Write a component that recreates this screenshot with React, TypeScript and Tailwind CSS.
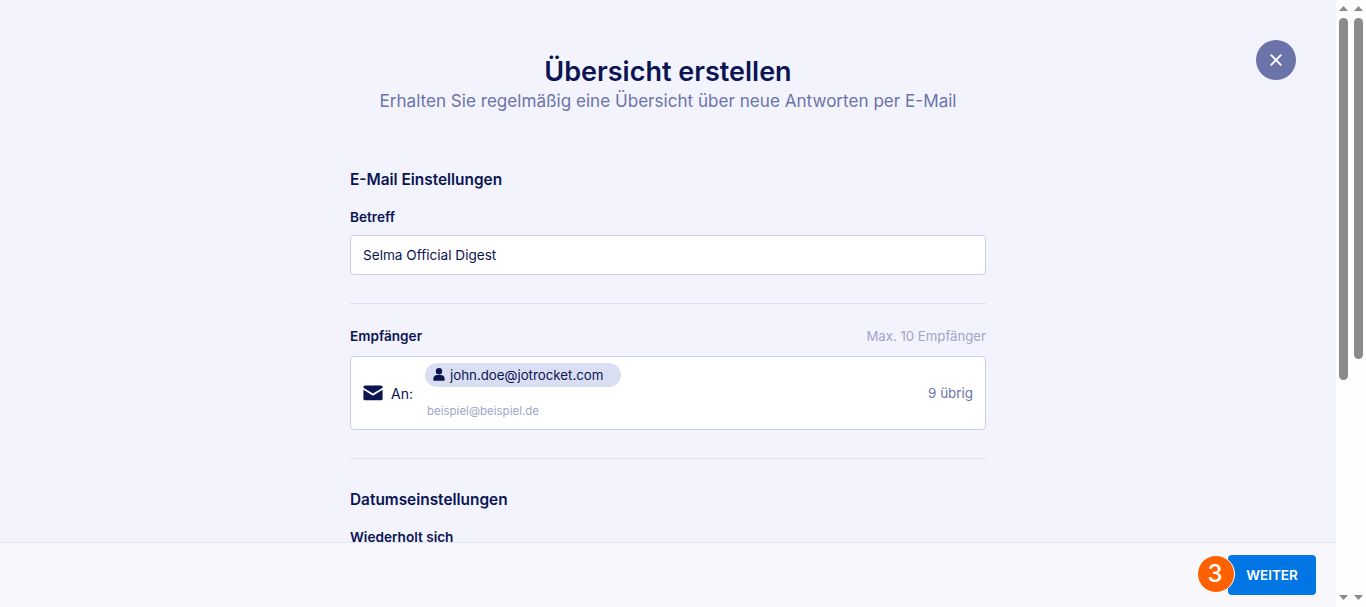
const F = "font-['Inter',sans-serif]";

function Label({ children }: { children: React.ReactNode }) {
  return <div className="text-[13.6px] leading-5 font-semibold text-[#0a1551]">{children}</div>;
}

function Scrollbar({ thumb }: { thumb: string }) {
  return (
    <div className="w-[15px] h-full flex flex-col items-center shrink-0">
      <svg width="9" height="5" viewBox="0 0 9 5" className="mt-[6px] shrink-0"><path d="M4.5 0L9 5H0z" fill="#8a8a8a" /></svg>
      <div className="flex-1 w-full pt-[7px]">
        <div className={`w-[9px] mx-auto bg-[#8a8a8a] rounded-[5px] ${thumb}`} />
      </div>
      <svg width="9" height="5" viewBox="0 0 9 5" className="mb-[7px] shrink-0"><path d="M0 0h9L4.5 5z" fill="#8a8a8a" /></svg>
    </div>
  );
}

export default function App() {
  return (
    <div className={`${F} w-[1366px] h-[607px] overflow-hidden flex bg-[#fdfdfd]`}>
      <div className="w-[1336px] shrink-0 h-full relative bg-[#f3f3fe] overflow-hidden flex flex-col">
        <button className="absolute top-10 right-10 w-10 h-10 rounded-full bg-[#6c73a8] flex items-center justify-center">
          <svg width="12" height="12" viewBox="0 0 12 12"><path d="M1.2 1.2l9.6 9.6M10.8 1.2l-9.6 9.6" stroke="#fff" strokeWidth="1.9" strokeLinecap="round" /></svg>
        </button>
        <div className="flex-1 overflow-hidden">
          <div className="w-[636px] mx-auto pt-[56px]">
            <h1 className="text-center text-[27px] leading-8 font-semibold text-[#0a1551]">Übersicht erstellen</h1>
            <p className="text-center text-[17.1px] leading-6 mt-[1px] text-[#6c73a8]">Erhalten Sie regelmäßig eine Übersicht über neue Antworten per E-Mail</p>
            <h2 className="mt-[55px] text-[15.4px] leading-6 font-semibold text-[#0a1551]">E-Mail Einstellungen</h2>
            <div className="mt-[15px]"><Label>Betreff</Label></div>
            <div className="mt-2 h-10 bg-white border border-[#c8ceed] rounded-[4px] px-3 flex items-center text-[13.6px] text-[#0a1551]">Selma Official Digest</div>
            <div className="h-px bg-[#dadef3] mt-7" />
            <div className="mt-[22px] flex justify-between items-center">
              <Label>Empfänger</Label>
              <span className="text-[13.2px] leading-5 text-[#a0a6c7]">Max. 10 Empfänger</span>
            </div>
            <div className="mt-[10px] h-[74px] bg-white border border-[#c8ceed] rounded-[4px] pl-3 pr-3 flex items-center text-[#0a1551]">
              <svg width="20" height="16" viewBox="0 0 20 16" className="shrink-0">
                <path d="M2 0.5h16a1.6 1.6 0 0 1 1.6 1.6v0.6L10 8.6 0.4 2.7v-0.6A1.6 1.6 0 0 1 2 0.5z" fill="#0a1551" />
                <path d="M0.4 4.8L10 10.7l9.6-5.9v8.9a1.6 1.6 0 0 1-1.6 1.6H2a1.6 1.6 0 0 1-1.6-1.6z" fill="#0a1551" />
              </svg>
              <span className="ml-2 text-[14px]">An:</span>
              <div className="ml-3 flex flex-col self-start">
                <div className="mt-[6px] h-6 w-[196px] rounded-full bg-[#dadef3] flex items-center pl-2 text-[13.3px]">
                  <svg width="12" height="13" viewBox="0 0 12 13" className="shrink-0 mb-[2px]">
                    <circle cx="6" cy="3.3" r="3.2" fill="#0a1551" />
                    <path d="M0.4 12.8V10.4C0.4 8.3 2.1 7 4.2 7h3.6c2.1 0 3.8 1.3 3.8 3.4v2.4z" fill="#0a1551" />
                  </svg>
                  <span className="ml-[5px] pt-[1px]">john.doe@jotrocket.com</span>
                </div>
                <div className="mt-[16px] ml-[2px] text-[11.5px] leading-4 text-[#a0a6c7]">beispiel@beispiel.de</div>
              </div>
              <span className="ml-auto text-[13.4px] text-[#6c73a8]">9 übrig</span>
            </div>
            <div className="h-px bg-[#dadef3] mt-7" />
            <h2 className="mt-[29px] text-[15.4px] leading-6 font-semibold text-[#0a1551]">Datumseinstellungen</h2>
            <div className="mt-[15px]"><Label>Wiederholt sich</Label></div>
          </div>
        </div>
        <div className="absolute left-0 right-0 bottom-0 h-[65px] bg-[#f8f8fc] border-t border-[#e3e5f5] flex items-center justify-end pr-5">
          <div className="relative">
            <div className="absolute left-[-31px] top-0 w-[38px] h-[38px] rounded-full bg-[#ff6100] border border-white flex items-center justify-center text-white text-[24px] font-medium z-10 pr-[2px]">3</div>
            <button className="w-[88px] h-10 rounded-[4px] bg-[#0075e3] text-white text-[13.5px] font-semibold">WEITER</button>
          </div>
        </div>
      </div>
      <div className="flex-1 h-full flex">
        <Scrollbar thumb="h-[362px]" />
        <Scrollbar thumb="h-[341px]" />
      </div>
    </div>
  );
}
